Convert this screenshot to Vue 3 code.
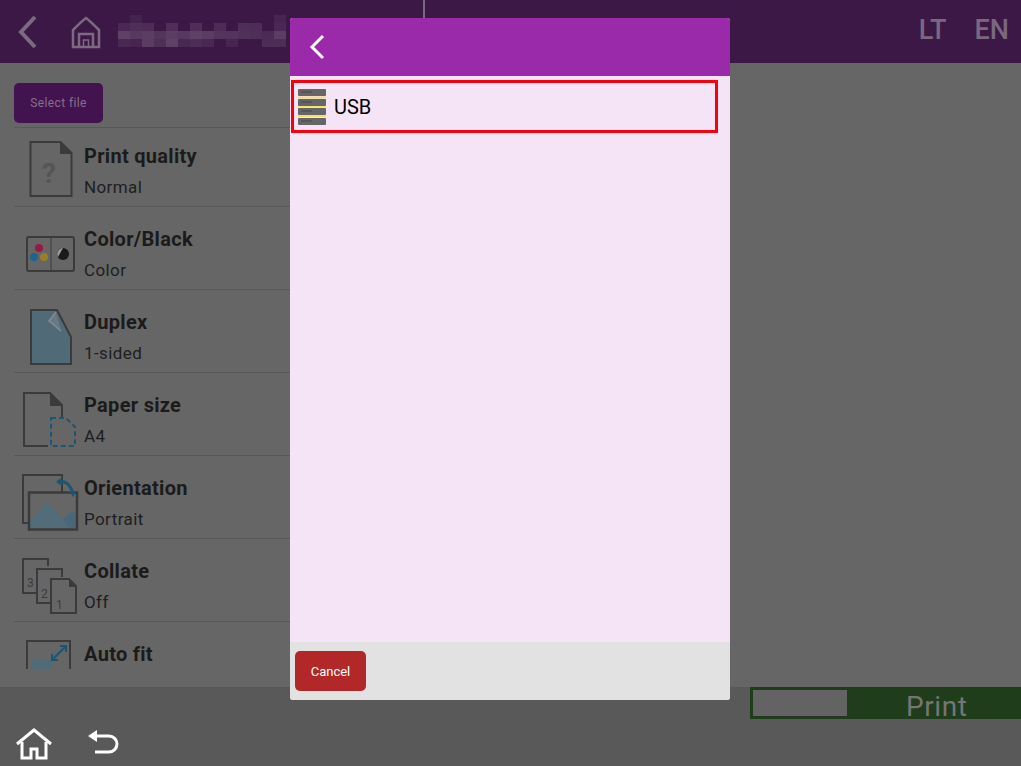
<script setup>
const rows = [
  { key: 'quality', title: 'Print quality', value: 'Normal' },
  { key: 'color', title: 'Color/Black', value: 'Color' },
  { key: 'duplex', title: 'Duplex', value: '1-sided' },
  { key: 'paper', title: 'Paper size', value: 'A4' },
  { key: 'orient', title: 'Orientation', value: 'Portrait' },
  { key: 'collate', title: 'Collate', value: 'Off' },
  { key: 'fit', title: 'Auto fit', value: '' },
]
const blur = [
  [3,8,.07],[15,0,.05],[15,8,.1],[27,8,.09],[39,16,.12],[51,8,.1],[63,16,.14],[75,8,.1],[87,16,.16],[99,8,.09],
  [3,16,.18],[15,16,.14],[27,16,.16],[39,24,.1],[51,16,.16],[63,24,.07],[75,16,.18],[87,24,.07],[99,16,.12],
  [3,24,.07],[15,24,.06],[27,24,.16],[51,24,.18],[75,24,.09],[111,16,.12],[123,16,.11],[135,16,.1],[147,16,.08],[159,8,.07],[159,0,.06],
  [111,24,.06],[123,8,.1],[135,8,.09],[147,24,.09],[159,16,.16],[159,24,.09],
]
</script>

<template>
  <div class="page">
    <header class="topbar">
      <svg class="back" width="24" height="36" viewBox="0 0 24 36"><path d="M19 3 5 18l14 15" fill="none" stroke="#7c6a80" stroke-width="4"/></svg>
      <svg class="home" width="30" height="34" viewBox="0 0 30 34"><path d="M2 31V14C6 10 11 5 15 2c4 3 9 8 13 12v17h-6V18H8v13ZM2 31h26" fill="none" stroke="#7c6a80" stroke-width="2.500"/><path d="M12.500 31V24h5v7" fill="none" stroke="#7c6a80" stroke-width="1.500"/></svg>
      <svg class="pixels" width="170" height="32" viewBox="0 0 170 32"><rect v-for="(b, i) in blur" :key="i" :x="b[0] - 3" :y="b[1]" width="12" height="8" fill="#fff" :opacity="b[2]"/></svg>
      <span class="lang-wrap"><span class="lang">LT</span><span class="lang">EN</span></span>
    </header>

    <main class="content">
      <button class="select">Select file</button>
      <section class="list">
        <div v-for="r in rows" :key="r.key" class="row" :class="'row-' + r.key">
          <div class="icon">
            <svg v-if="r.key === 'quality'" width="44" height="56" viewBox="0 0 44 56"><path d="M1.500 1h30l11 11v43h-41Z" fill="none" stroke="#3b3b3b" stroke-width="2"/><path d="M31 1v12h12Z" fill="#3b3b3b"/><text x="13" y="42" class="q">?</text></svg>
            <svg v-else-if="r.key === 'color'" width="49" height="36" viewBox="0 0 49 36"><rect x="1" y="1" width="47" height="34" rx="2" fill="none" stroke="#3b3b3b" stroke-width="2"/><path d="M25 2v32" stroke="#3b3b3b"/><circle cx="13" cy="12" r="4" fill="#9a1845"/><circle cx="8" cy="21" r="4" fill="#1c6590"/><circle cx="18" cy="21" r="4" fill="#9c7c26"/><circle cx="37" cy="18" r="6" fill="#1b1b1b"/><path d="M37 12a6 6 0 0 0-5 9Z" fill="#9a9a9a"/></svg>
            <svg v-else-if="r.key === 'duplex'" width="43" height="56" viewBox="0 0 43 56"><path d="M2 1h26l14 27v27H2Z" fill="#516a78" stroke="#3b3b3b" stroke-width="2"/><path d="M27 3 20 12l12 10" fill="#6a7a84" stroke="#868b8e" stroke-width="1.500"/></svg>
            <svg v-else-if="r.key === 'paper'" width="55" height="56" viewBox="0 0 55 56"><path d="M26 54H2V1h26l12 12v12" fill="none" stroke="#3b3b3b" stroke-width="2"/><path d="M28 1v13h12Z" fill="#3b3b3b"/><path d="M29 26h15l9 9v19H29Z" fill="none" stroke="#1c5672" stroke-width="2" stroke-dasharray="5 3"/></svg>
            <svg v-else-if="r.key === 'orient'" width="57" height="58" viewBox="0 0 57 58"><path d="M6 50H1V2h39v17" fill="none" stroke="#3b3b3b" stroke-width="2"/><path d="M8 55v-7l17-19 16 17 9-8 5 6v11Z" fill="#526c7a"/><path d="M41 46l9-8 5 6v11H47Z" fill="#48687a"/><rect x="7" y="19.500" width="48" height="37" fill="none" stroke="#3b3b3b" stroke-width="2.500"/><path d="M36 9c7-2 12 2 15 11" fill="none" stroke="#1c5672" stroke-width="3"/><path d="M34 9l6-5v9ZM47 18h8l-4 6Z" fill="#1c5672"/></svg>
            <svg v-else-if="r.key === 'collate'" width="56" height="56" viewBox="0 0 56 56"><path d="M14 35H1V1h25v7" fill="none" stroke="#3b3b3b" stroke-width="2"/><path d="M28 45H15V11h25v8" fill="none" stroke="#3b3b3b" stroke-width="2"/><path d="M29 21h18l7 7v27H29Z" fill="none" stroke="#3b3b3b" stroke-width="2"/><path d="M47 21v8h7Z" fill="#3b3b3b"/><text x="5" y="29" class="n">3</text><text x="19" y="40" class="n">2</text><text x="34" y="51" class="n">1</text></svg>
            <svg v-else width="46" height="30" viewBox="0 0 46 30"><path d="M1 30V2h43v28" fill="none" stroke="#3b3b3b" stroke-width="2"/><rect x="5" y="21" width="21" height="9" fill="#516a78"/><path d="M26 21 39 8M34 7h6v6M26 15v6h6" fill="none" stroke="#1c5672" stroke-width="2"/></svg>
          </div>
          <div class="labels">
            <div class="title">{{ r.title }}</div>
            <div v-if="r.value" class="value">{{ r.value }}</div>
          </div>
        </div>
      </section>
    </main>

    <footer class="bottom">
      <div class="nav">
        <svg width="36" height="32" viewBox="0 0 36 32"><path d="M1 16 18 2l17 14" fill="none" stroke="#fff" stroke-width="3"/><path d="M6 14v16h9v-9h6v9h9V14" fill="none" stroke="#fff" stroke-width="3"/></svg>
        <svg class="undo" width="34" height="26" viewBox="0 0 34 26"><path d="M2 7 11 1v12Z" fill="#fff"/><path d="M9 7h14a8 8 0 0 1 0 16H9" fill="none" stroke="#fff" stroke-width="3"/></svg>
      </div>
      <div class="print"><span class="print-box"></span><span class="print-text">Print</span></div>
    </footer>

    <div class="divider"></div>

    <div class="modal">
      <div class="modal-head">
        <svg width="18" height="28" viewBox="0 0 18 28"><path d="M15 3 4 14l11 11" fill="none" stroke="#fff" stroke-width="3"/></svg>
      </div>
      <div class="modal-body">
        <div class="usb">
          <svg width="30" height="36" viewBox="0 0 30 36">
            <path d="M1 8.500h28M1 17.500h28M1 27h28" stroke="#f2df6c" stroke-width="2"/>
            <g fill="#66666a"><rect x="1" y="0" width="28" height="7" rx="1"/><rect x="1" y="10" width="28" height="7" rx="1"/><rect x="1" y="19" width="28" height="7" rx="1"/><rect x="1" y="29" width="28" height="7" rx="1"/></g>
            <path d="M4 3h11M4 13h11M4 22h11M4 32h11" stroke="#44444a" stroke-width="1"/>
          </svg>
          <span>USB</span>
        </div>
      </div>
      <div class="modal-foot"><button class="cancel">Cancel</button></div>
    </div>
  </div>
</template>

<style>
html, body { margin: 0; background: #666; }
</style>

<style scoped>
.page { position: relative; width: 1021px; height: 766px; overflow: hidden; background: #666; font-family: Roboto, "Noto Sans", sans-serif; display: flex; flex-direction: column; }
.topbar { height: 63px; flex: none; background: #3c1846; display: flex; align-items: center; box-sizing: border-box; padding-left: 16px; }
.back { flex: none; }
.home { flex: none; margin-left: 31px; margin-top: 2px; }
.pixels { flex: none; margin-left: 17px; margin-top: -2px; }
.lang-wrap { margin-left: auto; display: flex; gap: 28px; margin-right: 12px; margin-top: -4px; }
.lang { color: #7a687f; font-size: 27px; line-height: 34px; font-weight: 500; }
.content { flex: none; height: 624px; box-sizing: border-box; padding: 20px 0 0 14px; overflow: hidden; }
.select { display: block; width: 89px; height: 40px; padding: 0; border: 0; border-radius: 5px; background: #431350; color: #86708b; font: 12px Roboto, sans-serif; letter-spacing: .4px; }
.list { margin-top: 4px; width: 276px; height: 544px; overflow: hidden; border-top: 1px solid #585858; }
.row { height: 82px; border-bottom: 1px solid #585858; display: flex; position: relative; }
.row-quality { height: 78px; }
.icon { width: 70px; flex: none; display: flex; align-items: center; justify-content: center; box-sizing: border-box; }
.row-quality .icon { padding: 4px 0 0 3px; }
.row-color .icon { padding: 12px 0 0 2px; }
.row-duplex .icon { padding: 12px 0 0 3px; }
.row-paper .icon { padding: 12px 0 0 1px; }
.row-orient .icon { padding: 9px 0 0 3px; }
.row-collate .icon { padding: 12px 0 0 2px; }
.row-fit .icon { padding: 0 0 18px 0; }
.labels { padding-top: 18px; }
.row-quality .labels { padding-top: 14px; }
.title { font-size: 20px; line-height: 28px; font-weight: 700; color: #1b1b1b; letter-spacing: .3px; white-space: nowrap; }
.value { font-size: 17px; line-height: 24px; margin-top: 5px; color: #1e1e1e; letter-spacing: .4px; }
.q { font: 700 28px Roboto, sans-serif; fill: #555; }
.n { font: 400 12px Roboto, sans-serif; fill: #3b3b3b; }
.bottom { flex: 1; background: #595959; display: flex; position: relative; justify-content: space-between; }
.nav { display: flex; gap: 34px; padding: 41px 0 0 16px; align-items: flex-start; }
.undo { margin-top: 1px; }
.print { align-self: flex-start; width: 271px; height: 32px; box-sizing: border-box; background: #1f3c1b; display: flex; }
.print-box { width: 94px; height: 26px; margin: 3px 0 0 3px; background: #636363; border: 0; }
.print-text { margin-left: 59px; color: #757575; font: 400 28px/39px Roboto, sans-serif; letter-spacing: .6px; }
.divider { position: absolute; left: 423px; top: 0; width: 2px; height: 18px; background: #7a6a80; }
.modal { position: absolute; left: 290px; top: 18px; width: 440px; height: 682px; border-radius: 3px; overflow: hidden; display: flex; flex-direction: column; background: #f5e3f6; }
.modal-head { height: 58px; flex: none; background: #9b2aaa; display: flex; align-items: center; padding-left: 18px; }
.modal-body { flex: 1; padding: 4px 12px 0 1px; }
.usb { height: 53px; box-sizing: border-box; border: 3px solid #f5000c; display: flex; align-items: center; gap: 7px; padding-left: 3px; color: #000; font: 20px Roboto, sans-serif; }
.usb span { margin-top: 1px; }
.modal-foot { height: 58px; flex: none; background: #e2e2e2; padding: 9px 0 0 5px; box-sizing: border-box; }
.cancel { display: block; width: 71px; height: 40px; padding: 0; border: 0; border-radius: 5px; background: #b22727; color: #fff; font: 13px Roboto, sans-serif; }
</style>
